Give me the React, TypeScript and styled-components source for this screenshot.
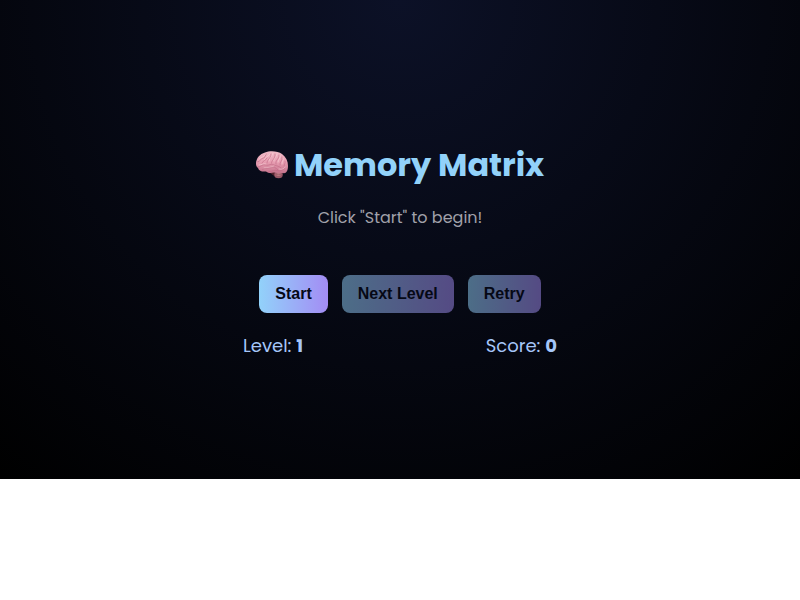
import React, { useState } from "react";
import styled, { createGlobalStyle } from "styled-components";

const GlobalStyle = createGlobalStyle`
  * { box-sizing: border-box; }
  body {
    margin: 0;
    background: #fff;
    font-family: Poppins, Inter, "Open Sans", sans-serif;
  }
`;

const Page = styled.main`
  display: flex;
  flex-direction: column;
  align-items: center;
  padding: 141px 16px 120px;
  background: radial-gradient(circle at top, #0c1127, #000);
`;

const Game = styled.section`
  display: flex;
  flex-direction: column;
  align-items: center;
  width: 100%;
  max-width: 314px;
`;

const Title = styled.h1`
  display: flex;
  align-items: center;
  gap: 6px;
  margin: 0;
  color: #92d2fa;
  font-size: 32px;
  line-height: 48px;
  font-weight: 700;
  white-space: nowrap;
`;

const BrainIcon = styled.svg`
  flex: none;
  width: 32px;
  height: 28px;
`;

const Message = styled.p`
  margin: 17px 0 45px;
  color: #a1a1aa;
  font-size: 16px;
  line-height: 24px;
`;

const Controls = styled.div`
  display: flex;
  justify-content: center;
  gap: 14px;
`;

const GameButton = styled.button`
  height: 38px;
  padding: 0 16px;
  border: 0;
  border-radius: 8px;
  background: linear-gradient(90deg, #92d2fa, #a38cf4);
  color: #050816;
  font: bold 16px "Liberation Sans", Arial, sans-serif;
  white-space: nowrap;
  cursor: pointer;

  &:disabled {
    opacity: 0.5;
    cursor: not-allowed;
  }
`;

const Stats = styled.div`
  display: flex;
  justify-content: space-between;
  width: 100%;
  margin-top: 20px;
  color: #a5c6f9;
  font-size: 18px;
  line-height: 26px;
`;

function Brain() {
  return (
    <BrainIcon viewBox="0 0 32 28" aria-hidden="true">
      <defs>
        <linearGradient id="cortex" x1="0" y1="0" x2="0" y2="1">
          <stop offset="0" stopColor="#f0bcc8" />
          <stop offset="0.5" stopColor="#e79db1" />
          <stop offset="1" stopColor="#c4738c" />
        </linearGradient>
        <radialGradient id="cerebellum">
          <stop offset="0" stopColor="#d08e92" />
          <stop offset="1" stopColor="#925061" />
        </radialGradient>
      </defs>
      <path d="M12 21c3 1 5 4 9 5l3-5z" fill="#54252f" />
      <ellipse cx="22.5" cy="23.7" rx="4.3" ry="3.5" fill="url(#cerebellum)" />
      <path
        d="M0 13C0 7 4 3 9 1.500C14-.5 22 0 26 3c4 3 6 7 6 12 0 5-2 8-5 7-3 1-6-.5-9-.5-3 .6-5 1-8-1C6 21 3 20 2 17c-1-1-2-2-2-4z"
        fill="url(#cortex)"
      />
      <g fill="none" strokeLinecap="round" strokeLinejoin="round">
        <path
          d="M3 8c2-2 4-1 6-4M8 9c1-3 4-3 6-6M13 10c0-4 3-4 4-8M18 10c-1-3 3-4 3-7M22 11c0-3 3-3 2-7M26 13c0-3 2-3 1-6M3 14c3 0 4-2 7-1M8 17c4-1 7 0 10-2M23 18c2 0 5 1 6-2"
          stroke="#f9d4d9"
          strokeWidth="0.9"
          opacity="0.7"
        />
        <path
          d="M1.500 11c3 0 3-4 6-4 2 0 1-3 3-4M6 12c1-3 4-2 5-5M11 12c0-4 4-4 4-9M15.500 12c0-3 4-4 3.500-9M20 13c-1-4 3-4 3-9M24 14c-1-3 3-4 2-8M28 15c0-2 2-3 1-5M2 16c3 0 4-3 8-2 3 1 5-2 8 0 3 1 5 1 7 3M6 19c3-3 7-1 11-3 3 0 3 2 5 3M13 20.500c4 0 5-2 8-1 3 1 5 0 8-2"
          stroke="#c06a84"
          strokeWidth="0.6"
        />
      </g>
      <path d="M20 23c2 1 4 1 6-.5M20 25c2 .6 4 .6 6-.4" fill="none" stroke="#7c4350" strokeWidth="0.5" />
    </BrainIcon>
  );
}

export default function App() {
  const [message, setMessage] = useState('Click "Start" to begin!');
  return (
    <>
      <GlobalStyle />
      <Page>
        <Game>
          <Title>
            <Brain />
            Memory Matrix
          </Title>
          <Message role="status">{message}</Message>
          <Controls>
            <GameButton type="button" onClick={() => setMessage("Memorize the pattern!")}>
              Start
            </GameButton>
            <GameButton type="button" disabled>Next Level</GameButton>
            <GameButton type="button" disabled>Retry</GameButton>
          </Controls>
          <Stats>
            <span>Level: <strong>1</strong></span>
            <span>Score: <strong>0</strong></span>
          </Stats>
        </Game>
      </Page>
    </>
  );
}
